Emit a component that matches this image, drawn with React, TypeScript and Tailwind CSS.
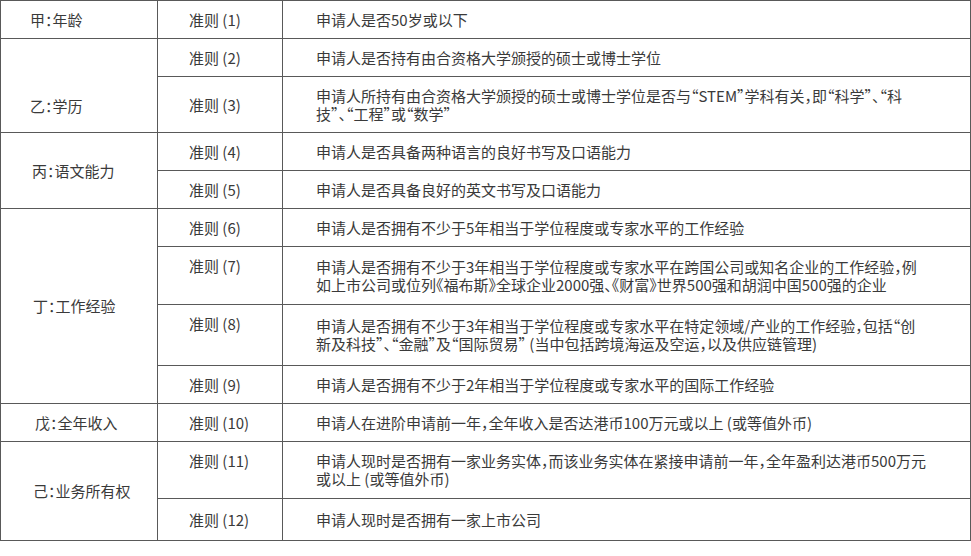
import type { ReactNode } from "react";

const line = "border-r border-b border-[#595959]";

function Group({ label, className = "" }: { label: string; className?: string }) {
  return <div className={`${line} flex items-center ${className}`}>{label}</div>;
}

function Rule({ n, top = false }: { n: number; top?: boolean }) {
  return (
    <div className={`${line} flex pl-[31px] ${top ? "items-start pt-[10px]" : "items-center"}`}>
      准则 ({n})
    </div>
  );
}

function Text({ children }: { children: ReactNode }) {
  return <div className={`${line} flex items-center pl-[33px] whitespace-nowrap`}>{children}</div>;
}

export default function App() {
  return (
    <div className="w-[971px] bg-white">
      <div
        className="grid grid-cols-[157px_125px_688px] grid-rows-[38px_38px_56px_38px_38px_38px_58px_61px_38px_38px_57px_42px] border-t border-l border-[#595959] text-[15px] leading-[18px] text-[#3a3a3a] [font-family:'Noto_Sans_CJK_SC','Noto_Sans',sans-serif] [font-feature-settings:'halt']"
      >
        <Group label="甲：年龄" className="pl-[29px]" />
        <Rule n={1} />
        <Text>申请人是否50岁或以下</Text>

        <Group label="乙：学历" className="row-span-2 pl-[29px] pt-[40px]" />
        <Rule n={2} />
        <Text>申请人是否持有由合资格大学颁授的硕士或博士学位</Text>
        <Rule n={3} />
        <Text>
          申请人所持有由合资格大学颁授的硕士或博士学位是否与“STEM”学科有关，即“科学”、“科
          <br />
          技”、“工程”或“数学”
        </Text>

        <Group label="丙：语文能力" className="row-span-2 pl-[31px]" />
        <Rule n={4} />
        <Text>申请人是否具备两种语言的良好书写及口语能力</Text>
        <Rule n={5} />
        <Text>申请人是否具备良好的英文书写及口语能力</Text>

        <Group label="丁：工作经验" className="row-span-4 pl-[32px]" />
        <Rule n={6} />
        <Text>申请人是否拥有不少于5年相当于学位程度或专家水平的工作经验</Text>
        <Rule n={7} top />
        <Text>
          申请人是否拥有不少于3年相当于学位程度或专家水平在跨国公司或知名企业的工作经验，例
          <br />
          如上市公司或位列《福布斯》全球企业2000强、《财富》世界500强和胡润中国500强的企业
        </Text>
        <Rule n={8} top />
        <Text>
          申请人是否拥有不少于3年相当于学位程度或专家水平在特定领域/产业的工作经验，包括“创
          <br />
          新及科技”、“金融”及“国际贸易” (当中包括跨境海运及空运，以及供应链管理)
        </Text>
        <Rule n={9} />
        <Text>申请人是否拥有不少于2年相当于学位程度或专家水平的国际工作经验</Text>

        <Group label="戊：全年收入" className="pl-[34px]" />
        <Rule n={10} />
        <Text>申请人在进阶申请前一年，全年收入是否达港币100万元或以上 (或等值外币)</Text>

        <Group label="己：业务所有权" className="row-span-2 pl-[32px]" />
        <Rule n={11} top />
        <Text>
          申请人现时是否拥有一家业务实体，而该业务实体在紧接申请前一年，全年盈利达港币500万元
          <br />
          或以上 (或等值外币)
        </Text>
        <Rule n={12} />
        <Text>申请人现时是否拥有一家上市公司</Text>
      </div>
    </div>
  );
}
